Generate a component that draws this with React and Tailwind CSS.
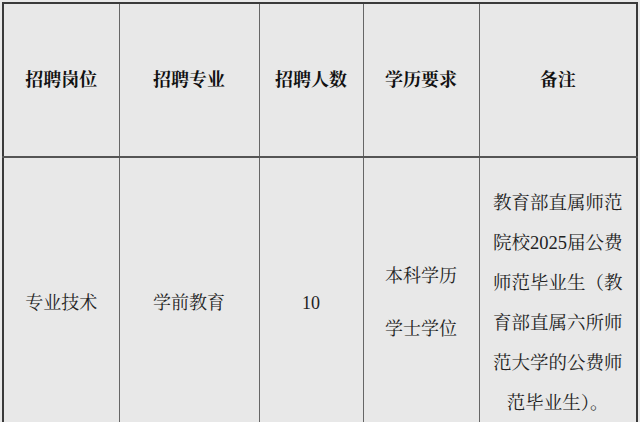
export default function App() {
  const font = { fontFamily: '"Liberation Serif", "Noto Serif CJK SC", "Noto Sans CJK SC", serif' }
  const headers = ['招聘岗位', '招聘专业', '招聘人数', '学历要求', '备注']
  const remark = ['教育部直属师范', '院校2025届公费', '师范毕业生（教', '育部直属六所师', '范大学的公费师', '范毕业生）。']

  return (
    <div className="w-[640px] h-[422px] overflow-hidden bg-[#e9e9e9] pt-[2px] pl-[2px]" style={font}>
      <table className="border-collapse table-fixed border-2 border-[#3a3a3a] bg-[#e8e8e8]">
        <colgroup>
          <col className="w-[116px]" />
          <col className="w-[140px]" />
          <col className="w-[104px]" />
          <col className="w-[116px]" />
          <col className="w-[158px]" />
        </colgroup>
        <thead>
          <tr className="h-[154px] border-b-2 border-[#555]">
            {headers.map((h) => (
              <th key={h} className="border-x border-[#666] text-center align-middle text-[18px] font-bold text-[#111]">
                {h}
              </th>
            ))}
          </tr>
        </thead>
        <tbody>
          <tr className="h-[292px]">
            <td className="border-x border-[#666] text-center align-middle text-[18px] text-[#222]">专业技术</td>
            <td className="border-x border-[#666] text-center align-middle text-[18px] text-[#222]">学前教育</td>
            <td className="border-x border-[#666] text-center align-middle text-[18px] text-[#222]">10</td>
            <td className="border-x border-[#666] text-center align-middle text-[18px] text-[#222] leading-[53px]">
              本科学历<br />学士学位
            </td>
            <td className="border-x border-[#666] text-center align-middle text-[18.5px] text-[#222] leading-[40px]">
              {remark.map((l) => (
                <div key={l}>{l}</div>
              ))}
            </td>
          </tr>
        </tbody>
      </table>
    </div>
  )
}
